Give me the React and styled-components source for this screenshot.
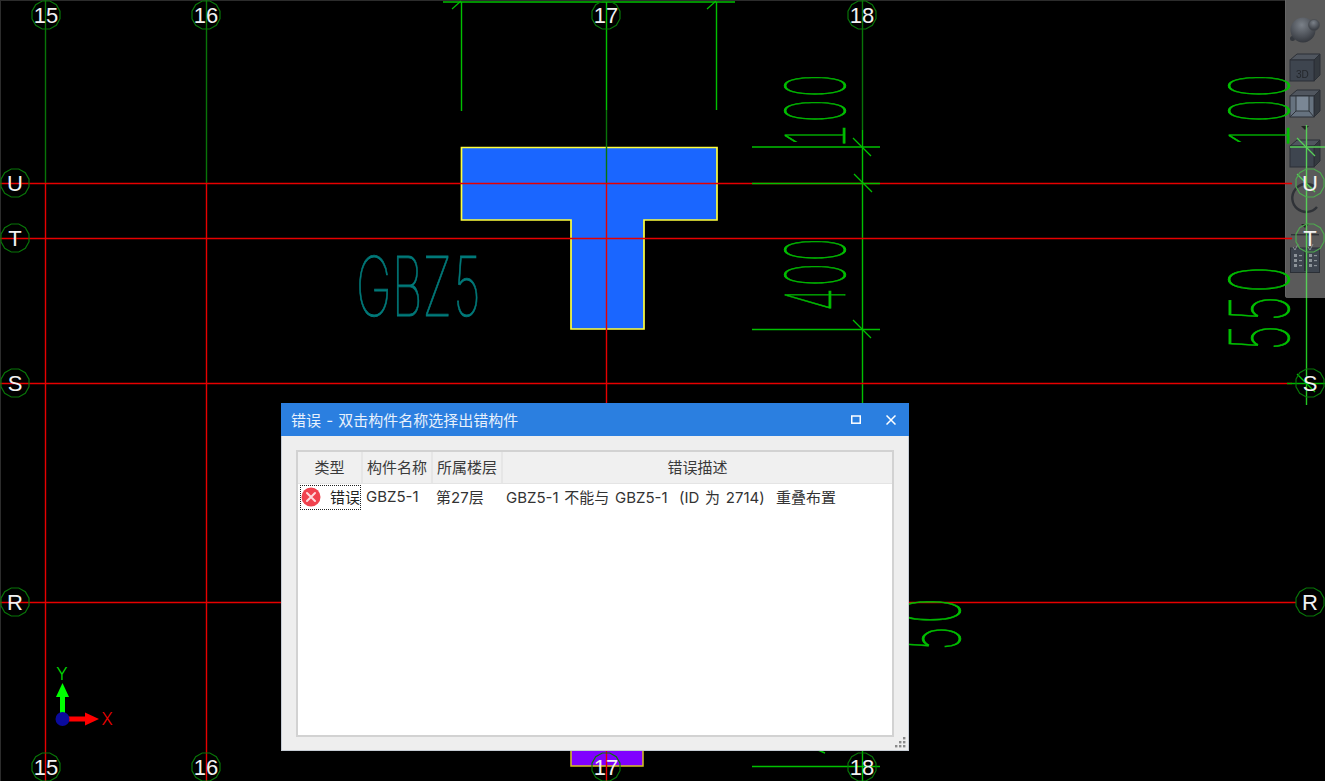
import React from "react";
import styled, { createGlobalStyle } from "styled-components";

const GREEN = "#00c000";
const DARK_GREEN = "#087408";
const RED = "#e60000";
const SOFT_GREEN = "#58cf58";

const GlobalStyle = createGlobalStyle`
  html, body {
    margin: 0;
    padding: 0;
    background: #000;
    overflow: hidden;
  }
`;

const Stage = styled.div`
  position: relative;
  width: 1325px;
  height: 781px;
  background: #000;
  overflow: hidden;
  box-shadow: inset 1px 1px 0 #2c2c2c;
`;

const Drawing = styled.svg`
  position: absolute;
  left: 0;
  top: 0;
  width: 1325px;
  height: 781px;
`;

const BubbleLabel = styled.text`
  font-family: "Liberation Sans", sans-serif;
  font-size: 22px;
  fill: #f2f2f2;
  text-anchor: middle;
`;

const CadText = styled.text`
  font-family: "Inter", sans-serif;
  font-size: 82px;
  font-weight: 100;
  font-variant-numeric: tabular-nums;
  fill: ${props => props.$color};
  stroke: ${props => props.$color};
  stroke-width: 0.9px;
`;

const AxisLabel = styled.text`
  font-family: "Inter", sans-serif;
  font-size: 17px;
  font-weight: 300;
  fill: ${props => props.$color};
  text-anchor: middle;
`;

const Toolbar = styled.div`
  position: absolute;
  right: 0;
  top: 0;
  width: 40px;
  height: 298px;
  box-sizing: border-box;
  padding-top: 17px;
  background: #5a5a5a;
  border-bottom-left-radius: 3px;
  box-shadow: inset 1px 0 0 #666;
  display: flex;
  flex-direction: column;
  align-items: center;
`;

const ToolIcon = styled.svg`
  display: block;
  flex: none;
  margin-top: ${props => props.$top || 0}px;
  filter: blur(0.35px);
`;

const Dialog = styled.div`
  position: absolute;
  left: 281px;
  top: 403px;
  width: 628px;
  height: 348px;
  box-sizing: border-box;
  display: flex;
  flex-direction: column;
  background: #eeeeee;
  border: 1px solid #c6ccd4;
  border-top: none;
  font-family: "Inter", "Noto Sans CJK SC", sans-serif;
`;

const TitleBar = styled.div`
  height: 33px;
  flex: none;
  margin: 0 -1px;
  padding: 0 13px 0 10px;
  display: flex;
  align-items: center;
  background: #2b7fe0;
  color: #e8f1fc;
  font-size: 15px;
  word-spacing: 1px;
`;

const TitleText = styled.span`
  flex: 1;
`;

const WindowButton = styled.svg`
  display: block;
  margin-left: ${props => props.$left}px;
`;

const DialogBody = styled.div`
  position: relative;
  flex: 1;
  padding: 14px 14px 13px 14px;
  display: flex;
`;

const ListBox = styled.div`
  flex: 1;
  background: #fff;
  border: 2px solid #d2d2d2;
  display: flex;
  flex-direction: column;
`;

const HeaderRow = styled.div`
  display: grid;
  grid-template-columns: 65px 70px 70px 1fr;
  height: 31px;
  background: #f0f0f0;
  border-bottom: 1px solid #e4e4e4;
`;

const HeaderCell = styled.div`
  display: flex;
  align-items: center;
  justify-content: center;
  padding-bottom: 2px;
  color: #3a3a3a;
  font-size: 15px;
  border-right: 2px solid #e6e6e6;
  &:last-child {
    border-right: none;
  }
`;

const DataRow = styled.div`
  display: grid;
  grid-template-columns: 65px 70px 70px 1fr;
  height: 26px;
  color: #333;
  font-size: 15px;
`;

const TypeCell = styled.div`
  margin: 1px 2px 1px 2px;
  border: 1px dotted #222;
  display: flex;
  align-items: center;
  justify-content: space-between;
  padding: 0 0 2px 0;
  color: #222;
`;

const DataCell = styled.div`
  display: flex;
  align-items: center;
  padding: 0 0 3px ${props => props.$left}px;
  white-space: pre;
  word-spacing: 1.5px;
`;

const Grip = styled.svg`
  position: absolute;
  right: 2px;
  bottom: 2px;
  display: block;
`;

const bubblePoints = (cx, cy, r = 14.5) => {
  const points = [];
  for (let i = 0; i < 12; i++) {
    const a = (Math.PI / 6) * i + Math.PI / 12;
    points.push(`${(cx + r * Math.cos(a)).toFixed(1)},${(cy + r * Math.sin(a)).toFixed(1)}`);
  }
  return points.join(" ");
};

const Bubble = ({ x, y, label, color = DARK_GREEN }) => (
  <g>
    <polygon points={bubblePoints(x, y)} fill="none" stroke={color} strokeWidth="1.2" />
    <BubbleLabel x={x} y={y + 8}>{label}</BubbleLabel>
  </g>
);

const Seg = ({ x1, y1, x2, y2, color = GREEN, w = 1.4 }) => (
  <line x1={x1} y1={y1} x2={x2} y2={y2} stroke={color} strokeWidth={w} />
);

const Tick = ({ x, y, color = GREEN }) => (
  <Seg x1={x - 9} y1={y - 9} x2={x + 9} y2={y + 9} color={color} w={1.2} />
);

const RotatedNumber = ({ x, y, value, scale = 0.47 }) => (
  <CadText $color={GREEN} transform={`translate(${x} ${y}) rotate(-90) scale(${scale} 1)`}>
    {value}
  </CadText>
);

const columns = [45.5, 206.5];
const rows = [183.5, 238.5, 383.5, 602.5];
const topBubbles = [
  [46, "15"],
  [206, "16"],
  [606, "17"],
  [862, "18"],
];
const sideBubbles = [
  [183, "U"],
  [238, "T"],
  [383, "S"],
  [602, "R"],
];

const CadDrawing = () => (
  <Drawing viewBox="0 0 1325 781">
    {columns.map(x => (
      <g key={x}>
        <Seg x1={x} y1={0} x2={x} y2={183} color={DARK_GREEN} />
        <Seg x1={x} y1={183} x2={x} y2={781} color={RED} />
      </g>
    ))}

    <polygon
      points="461.5,147.5 717,147.5 717,220 644,220 644,329 571,329 571,220 461.5,220"
      fill="#1a66ff"
      stroke="#ffff3c"
      strokeWidth="1.7"
    />

    <rect x="571" y="745" width="72" height="21" fill="#8000ff" stroke="#d8c420" strokeWidth="1.5" />

    <Seg x1={606.5} y1={2} x2={606.5} y2={110} />
    <Seg x1={606.5} y1={110} x2={606.5} y2={183} color={DARK_GREEN} />
    <Seg x1={606.5} y1={183} x2={606.5} y2={781} color={RED} />
    <Seg x1={862.5} y1={0} x2={862.5} y2={130} color={DARK_GREEN} />
    <Seg x1={862.5} y1={130} x2={862.5} y2={781} />

    {rows.map(y => (
      <Seg key={y} x1={0} y1={y} x2={y === 602.5 ? 1296 : 1292} y2={y} color={RED} />
    ))}

    {/* dimension top */}
    <Seg x1={443} y1={2} x2={735} y2={2} />
    <Seg x1={461.5} y1={2} x2={461.5} y2={111} />
    <Seg x1={716.5} y1={2} x2={716.5} y2={110} />
    <Seg x1={452} y1={9} x2={461} y2={1} w={1.2} />
    <Seg x1={707} y1={9} x2={716} y2={1} w={1.2} />

    {/* dimension right */}
    <Seg x1={752} y1={147} x2={880} y2={147} />
    <Seg x1={752} y1={183.5} x2={880} y2={183.5} />
    <Seg x1={752} y1={329.5} x2={880} y2={329.5} />
    <Seg x1={752} y1={766.5} x2={880} y2={766.5} />
    <Seg x1={818} y1={750} x2={825} y2={753} />
    <Tick x={862} y={147} />
    <Tick x={863} y={183} />
    <Tick x={862} y={329} />

    <CadText $color="#007a7a" x={356} y={316} textLength="127" lengthAdjust="spacingAndGlyphs">
      GBZ5
    </CadText>
    <RotatedNumber x={845} y={148} value="100" />
    <RotatedNumber x={845} y={312} value="400" />
    <RotatedNumber x={1289} y={148} value="100" />
    <RotatedNumber x={1289} y={352} value="550" scale={0.55} />
    <RotatedNumber x={960} y={652} value="50" scale={0.52} />

    {/* far right dimension */}
    <Seg x1={1306.5} y1={125} x2={1306.5} y2={298} color={SOFT_GREEN} />
    <Seg x1={1306.5} y1={298} x2={1306.5} y2={405} color="#22c822" />
    <Seg x1={1290} y1={147} x2={1325} y2={147} color={SOFT_GREEN} />
    <Seg x1={1287} y1={383.5} x2={1325} y2={383.5} color="#00b400" />
    <Tick x={1306} y={147} color={SOFT_GREEN} />
    <Tick x={1306} y={183} color={SOFT_GREEN} />
    <Tick x={1306} y={383} />

    {topBubbles.map(([x, label]) => (
      <g key={x}>
        <Bubble x={x} y={15} label={label} />
        <Bubble x={x} y={767} label={label} />
      </g>
    ))}
    {sideBubbles.map(([y, label]) => (
      <g key={y}>
        <Bubble x={15} y={y} label={label} />
        <Bubble x={1310} y={y} label={label} color={y < 298 ? "#4fa84f" : DARK_GREEN} />
      </g>
    ))}

    {/* axis marker */}
    <rect x="60" y="694" width="5" height="22" fill="#00ff00" />
    <polygon points="62.5,683 69,697 56,697" fill="#00ff00" />
    <rect x="68" y="716.5" width="18" height="5" fill="#ff0000" />
    <polygon points="99,719 85,712.5 85,725.5" fill="#ff0000" />
    <circle cx="62.5" cy="719" r="7" fill="#0a0a9c" />
    <AxisLabel $color="#00e000" x={62} y={680}>Y</AxisLabel>
    <AxisLabel $color="#f00000" x={107} y={725}>X</AxisLabel>
  </Drawing>
);

const Cube = ({ top, face = "#3e454f", children }) => (
  <ToolIcon $top={top} width="32" height="29" viewBox="0 0 32 29">
    <polygon points="1,7 8,1 31,1 25,7" fill="#50565f" stroke="#2b2f36" />
    <polygon points="25,7 31,1 31,22 25,28" fill="#34393f" stroke="#2b2f36" />
    <rect x="1" y="7" width="24" height="21" fill={face} stroke="#2b2f36" />
    {children}
  </ToolIcon>
);

const ToolStrip = () => (
  <Toolbar>
    <ToolIcon width="32" height="26" viewBox="0 0 32 26">
      <defs>
        <radialGradient id="planet" cx="0.45" cy="0.3" r="0.8">
          <stop offset="0" stopColor="#7b8189" />
          <stop offset="1" stopColor="#2a2d33" />
        </radialGradient>
      </defs>
      <circle cx="3.5" cy="21.5" r="2.5" fill="#34383e" />
      <circle cx="14" cy="13" r="12.5" fill="url(#planet)" />
      <circle cx="25" cy="8" r="5.5" fill="url(#planet)" stroke="#44484e" strokeWidth="0.6" />
    </ToolIcon>
    <Cube top={10}>
      <text x="7" y="25" fontFamily="Liberation Sans, sans-serif" fontSize="10" fill="#24272c">3D</text>
    </Cube>
    <Cube top={7} face="#66727f">
      <rect x="7" y="7" width="13" height="15" fill="#7a8795" stroke="#2f343b" />
      <line x1="1" y1="28" x2="7" y2="22" stroke="#2f343b" />
      <line x1="25" y1="28" x2="20" y2="22" stroke="#2f343b" />
    </Cube>
    <ToolIcon $top={8} width="8" height="4" viewBox="0 0 8 4">
      <polygon points="0,0 8,0 4,4" fill="#222" />
    </ToolIcon>
    <Cube top={9} />
    <ToolIcon $top={13} width="32" height="36" viewBox="0 0 32 36">
      <path d="M26 6 A14 14 0 1 0 28 26" fill="none" stroke="#2f3237" strokeWidth="2.4" />
    </ToolIcon>
    <ToolIcon $top={7} width="8" height="4" viewBox="0 0 8 4">
      <polygon points="0,0 8,0 4,4" fill="#222" />
    </ToolIcon>
    <ToolIcon $top={6} width="28" height="2" viewBox="0 0 28 2">
      <rect width="28" height="1.4" fill="#2f3237" />
    </ToolIcon>
    <ToolIcon $top={8} width="30" height="29" viewBox="0 0 30 29">
      <rect x="0.5" y="4" width="29" height="24.5" fill="#3e454f" stroke="#2b2f36" />
      <line x1="15" y1="7" x2="15" y2="27" stroke="#24272c" strokeWidth="1.4" />
      <path d="M3 3 L5 6 L8 0 M18 3 L20 6 L23 0" fill="none" stroke="#8b9096" />
      {[10, 15, 20].map(y => (
        <g key={y} fill="#8b9298">
          <rect x="4" y={y} width="3" height="3" />
          <rect x="9" y={y + 1} width="3" height="1.2" />
          <rect x="19" y={y} width="3" height="3" />
          <rect x="24" y={y + 1} width="3" height="1.2" />
        </g>
      ))}
    </ToolIcon>
  </Toolbar>
);

const ErrorIcon = () => (
  <svg width="20" height="20" viewBox="0 0 20 20">
    <circle cx="10" cy="10" r="9.5" fill="#f0424e" />
    <path d="M6 6 L14 14 M14 6 L6 14" stroke="#ffd9dc" strokeWidth="2" strokeLinecap="round" />
  </svg>
);

const ErrorDialog = () => (
  <Dialog>
    <TitleBar>
      <TitleText>错误 - 双击构件名称选择出错构件</TitleText>
      <WindowButton width="10" height="9" viewBox="0 0 10 9">
        <rect x="0.75" y="1" width="8.5" height="7.2" fill="none" stroke="#fff" strokeWidth="1.5" />
      </WindowButton>
      <WindowButton $left={25} width="10" height="10" viewBox="0 0 10 10">
        <path d="M0.5 0.5 L9.5 9.5 M9.5 0.5 L0.5 9.5" stroke="#fff" strokeWidth="1.5" />
      </WindowButton>
    </TitleBar>
    <DialogBody>
      <ListBox>
        <HeaderRow>
          <HeaderCell>类型</HeaderCell>
          <HeaderCell>构件名称</HeaderCell>
          <HeaderCell>所属楼层</HeaderCell>
          <HeaderCell>错误描述</HeaderCell>
        </HeaderRow>
        <DataRow>
          <TypeCell>
            <ErrorIcon />
            <span>错误</span>
          </TypeCell>
          <DataCell $left={3}>GBZ5-1</DataCell>
          <DataCell $left={3}>第27层</DataCell>
          <DataCell $left={3}>GBZ5-1 不能与 GBZ5-1  (ID 为 2714)  重叠布置</DataCell>
        </DataRow>
      </ListBox>
      <Grip width="11" height="11" viewBox="0 0 11 11">
        <g fill="#8a8a8a">
          <rect x="8" y="0" width="2.4" height="2.4" />
          <rect x="4" y="4" width="2.4" height="2.4" />
          <rect x="8" y="4" width="2.4" height="2.4" />
          <rect x="0" y="8" width="2.4" height="2.4" />
          <rect x="4" y="8" width="2.4" height="2.4" />
          <rect x="8" y="8" width="2.4" height="2.4" />
        </g>
      </Grip>
    </DialogBody>
  </Dialog>
);

export default function App() {
  return (
    <Stage>
      <GlobalStyle />
      <ToolStrip />
      <CadDrawing />
      <ErrorDialog />
    </Stage>
  );
}
